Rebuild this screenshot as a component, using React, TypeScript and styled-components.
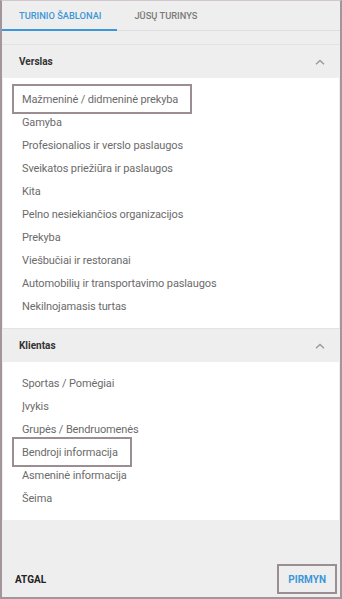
import styled, { createGlobalStyle } from "styled-components";

const GlobalStyle = createGlobalStyle`
  html, body {
    margin: 0;
    padding: 0;
    background: #eeeeee;
  }
  * {
    box-sizing: border-box;
  }
`;

const sections = [
  {
    title: "Verslas",
    items: [
      "Mažmeninė / didmeninė prekyba",
      "Gamyba",
      "Profesionalios ir verslo paslaugos",
      "Sveikatos priežiūra ir paslaugos",
      "Kita",
      "Pelno nesiekiančios organizacijos",
      "Prekyba",
      "Viešbučiai ir restoranai",
      "Automobilių ir transportavimo paslaugos",
      "Nekilnojamasis turtas",
    ],
    marked: "Mažmeninė / didmeninė prekyba",
  },
  {
    title: "Klientas",
    items: [
      "Sportas / Pomėgiai",
      "Įvykis",
      "Grupės / Bendruomenės",
      "Bendroji informacija",
      "Asmeninė informacija",
      "Šeima",
    ],
    marked: "Bendroji informacija",
  },
];

const ChevronUp = () => (
  <svg width="10" height="6" viewBox="0 0 10 6" fill="none">
    <path d="M1 5.2 L5 1.4 L9 5.2" stroke="#9a9a9a" strokeWidth="1.4" />
  </svg>
);

const App = () => (
  <Screen>
    <GlobalStyle />
    <TabBar>
      <Tab active>Turinio šablonai</Tab>
      <Tab>Jūsų turinys</Tab>
    </TabBar>
    <Body>
      {sections.map((section) => (
        <Section key={section.title}>
          <SectionHeader>
            <SectionTitle>{section.title}</SectionTitle>
            <ChevronUp />
          </SectionHeader>
          <ItemList>
            {section.items.map((item) => (
              <Item key={item}>
                <ItemLabel marked={item === section.marked}>{item}</ItemLabel>
              </Item>
            ))}
          </ItemList>
        </Section>
      ))}
    </Body>
    <Footer>
      <FooterButton>Atgal</FooterButton>
      <FooterButton primary marked>
        Pirmyn
      </FooterButton>
    </Footer>
  </Screen>
);

export default App;

const Screen = styled.div`
  width: 342px;
  height: 599px;
  display: flex;
  flex-direction: column;
  background: #eeeeee;
  border: 2px solid #a2959b;
  border-top: 1px solid #cfc7cb;
  font-family: Roboto, "Liberation Sans", sans-serif;
  overflow: hidden;
`;

const TabBar = styled.div`
  display: flex;
  height: 30px;
  border-bottom: 1px solid #dedede;
`;

const Tab = styled.div<{ active?: boolean }>`
  display: flex;
  align-items: center;
  justify-content: center;
  padding: 1px 16px 0 17px;
  height: 30px;
  font-size: 9.3px;
  font-weight: 500;
  text-transform: uppercase;
  color: ${(p) => (p.active ? "#3b97d8" : "#7a7a7a")};
  border-bottom: 2px solid ${(p) => (p.active ? "#3b97d8" : "transparent")};
`;

const Body = styled.div`
  padding-top: 13px;
  display: flex;
  flex-direction: column;
`;

const Section = styled.div`
  display: flex;
  flex-direction: column;
`;

const SectionHeader = styled.div`
  display: flex;
  align-items: center;
  justify-content: space-between;
  height: 34px;
  padding: 0 15px 0 17px;
  border-top: 1px solid #e3e3e3;
`;

const SectionTitle = styled.span`
  font-size: 10px;
  font-weight: 700;
  color: #333333;
`;

const ItemList = styled.div`
  background: #ffffff;
  margin: 0 1px;
  padding: 10px 0;
  display: flex;
  flex-direction: column;
`;

const Item = styled.div`
  height: 23px;
  line-height: 23px;
  padding-left: 19px;
  font-size: 11px;
  letter-spacing: -0.12px;
  color: #6b6b6b;
`;

const ItemLabel = styled.span<{ marked?: boolean }>`
  position: relative;
  display: inline-block;

  ${(p) =>
    p.marked &&
    `
    &::before {
      content: "";
      position: absolute;
      left: -10px;
      right: -14px;
      top: -4px;
      bottom: -3px;
      border: 2px solid #9b8e93;
    }
  `}
`;

const Footer = styled.div`
  flex: 1;
  display: flex;
  align-items: flex-end;
  justify-content: space-between;
  padding: 0 3px 3px 11px;
`;

const FooterButton = styled.div<{ primary?: boolean; marked?: boolean }>`
  height: 30px;
  display: flex;
  align-items: center;
  padding: 0 ${(p) => (p.marked ? "9px" : "0")};
  font-size: 10px;
  font-weight: 700;
  text-transform: uppercase;
  color: ${(p) => (p.primary ? "#3b97d8" : "#222222")};
  border: 2px solid ${(p) => (p.marked ? "#9b8e93" : "transparent")};
`;
